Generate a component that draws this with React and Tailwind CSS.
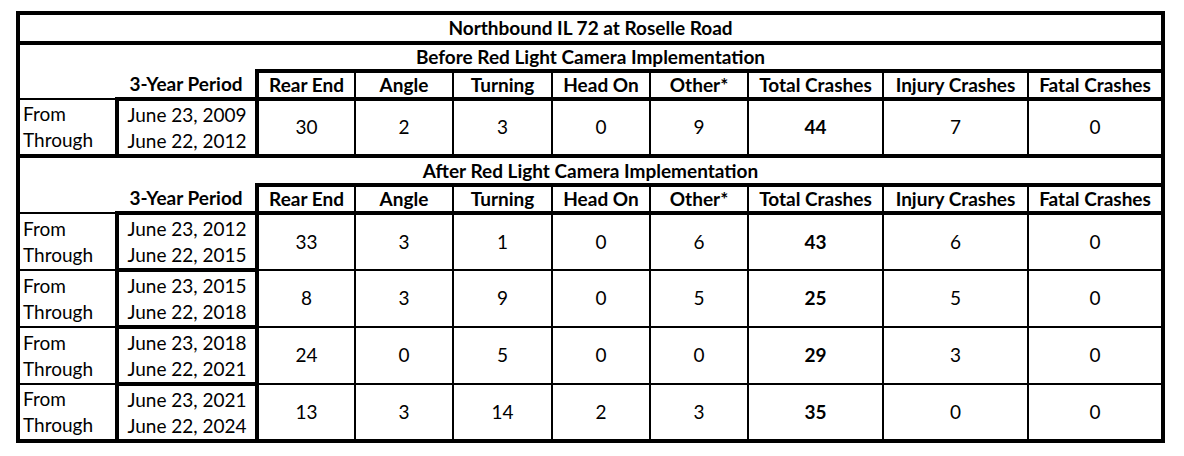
const cols = [99, 140, 98, 98, 99, 98, 98, 135, 145, 135];

const heads = ['Rear End', 'Angle', 'Turning', 'Head On', 'Other*', 'Total Crashes', 'Injury Crashes', 'Fatal Crashes'];

const before = [{ from: 'June 23, 2009', to: 'June 22, 2012', v: [30, 2, 3, 0, 9, 44, 7, 0] }];

const after = [
  { from: 'June 23, 2012', to: 'June 22, 2015', v: [33, 3, 1, 0, 6, 43, 6, 0] },
  { from: 'June 23, 2015', to: 'June 22, 2018', v: [8, 3, 9, 0, 5, 25, 5, 0] },
  { from: 'June 23, 2018', to: 'June 22, 2021', v: [24, 0, 5, 0, 0, 29, 3, 0] },
  { from: 'June 23, 2021', to: 'June 22, 2024', v: [13, 3, 14, 2, 3, 35, 0, 0] },
];

function SectionTitle({ children, tall }) {
  return (
    <tr className={tall ? 'h-[29px]' : 'h-[28px]'}>
      <td colSpan={10} className="border-x-4 border-t-4 border-b-0 border-black text-center font-bold leading-[22px]">
        {children}
      </td>
    </tr>
  );
}

function HeaderRow() {
  return (
    <tr className="h-[28px]">
      <td className="border-l-4 border-b-2 border-black"></td>
      <td className="border-r-4 border-b-4 border-black text-center font-bold leading-[22px]">3-Year Period</td>
      {heads.map((h, i) => (
        <td
          key={h}
          className={`border-2 border-t-4 border-b-4 border-black text-center font-bold leading-[22px] ${i === heads.length - 1 ? 'border-r-4' : ''}`}
        >
          {h}
        </td>
      ))}
    </tr>
  );
}

function DataRow({ row, last }) {
  const bottom = last ? 'border-b-4' : 'border-b-2';
  return (
    <tr className="h-[57px]">
      <td className={`border-l-4 ${bottom} border-black pl-[3px] align-middle leading-[26px]`}>
        From
        <br />
        Through
      </td>
      <td className="border-4 border-black text-center leading-[26px]">
        {row.from}
        <br />
        {row.to}
      </td>
      {row.v.map((n, i) => (
        <td
          key={i}
          className={`border-2 ${bottom} border-black text-center ${i === 5 ? 'font-bold' : ''} ${i === 7 ? 'border-r-4' : ''}`}
        >
          {n}
        </td>
      ))}
    </tr>
  );
}

export default function App() {
  return (
    <div className="min-h-[456px] w-[1184px] bg-white pt-[11px] pl-[16px]">
      <table
        className="table-fixed border-collapse text-[19px] text-black"
        style={{ fontFamily: 'Lato, "Liberation Sans", sans-serif' }}
      >
        <colgroup>
          {cols.map((w, i) => (
            <col key={i} style={{ width: w }} />
          ))}
        </colgroup>
        <tbody>
          <tr className="h-[30px]">
            <td colSpan={10} className="border-4 border-black text-center font-bold leading-[22px]">
              Northbound IL 72 at Roselle Road
            </td>
          </tr>
          <SectionTitle>Before Red Light Camera Implementation</SectionTitle>
          <HeaderRow />
          {before.map((r) => (
            <DataRow key={r.from} row={r} last />
          ))}
          <SectionTitle tall>After Red Light Camera Implementation</SectionTitle>
          <HeaderRow />
          {after.map((r, i) => (
            <DataRow key={r.from} row={r} last={i === after.length - 1} />
          ))}
        </tbody>
      </table>
    </div>
  );
}
